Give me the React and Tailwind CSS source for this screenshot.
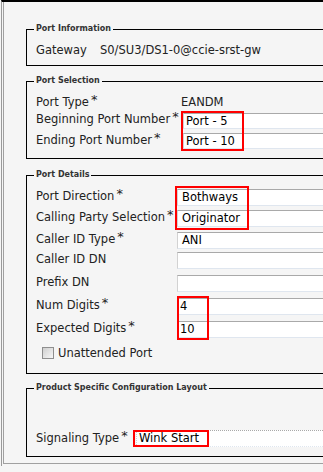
import React from "react";

// required-field marker
const Req = () => (
  <span className="relative -top-[2px] ml-[2px] text-[13px] leading-none">*</span>
);

// text box / dropdown look
const Box = ({ children, className = "" }) => (
  <div
    className={`flex-1 border border-[#d2d2d2] border-t-[#a9a9a9] border-b-[#dfe6ef] bg-white text-black whitespace-nowrap ${className}`}
  >
    {children}
  </div>
);

const Legend = ({ children }) => (
  <legend className="-ml-[2px] px-[2px] text-[8px] font-bold leading-[10px] text-[#333]">
    {children}
  </legend>
);

const Redline = ({ className = "" }) => (
  <div className={`pointer-events-none absolute border-2 border-[#ff0000] ${className}`} />
);

const DetailRow = ({ label, req, h, children }) => (
  <div className={`flex ${h}`}>
    <div className="w-[141px] pt-[1px] leading-[16px]">
      {label}
      {req && <Req />}
    </div>
    <div className="flex flex-1 pt-[2px]">{children}</div>
  </div>
);

export default function App() {
  return (
    <div className="h-[472px] w-[323px] overflow-hidden bg-[#f5f5f5] font-['DejaVu_Sans',sans-serif] text-[11.5px] text-[#222]">
      <div className="ml-px h-[466px] border-l border-t-2 border-[#9a9a9a] border-t-black">
        <div className="ml-px h-[462px] border-b border-l border-[#a0a0a0] pl-[22px] pt-[22px]">
          {/* Port Information */}
          <fieldset className="w-[330px] border border-black pb-[7px] pl-[9px] pt-[8px]">
            <Legend>Port Information</Legend>
            <div className="flex h-[16px] leading-[16px]">
              <div className="w-[64px]">Gateway</div>
              <div>S0/SU3/DS1-0@ccie-srst-gw</div>
            </div>
          </fieldset>

          {/* Port Selection */}
          <fieldset className="mt-[10px] w-[330px] border border-black pb-[7px] pl-[9px] pt-[7px]">
            <Legend>Port Selection</Legend>
            <div className="flex h-[18px] pt-[1px] leading-[16px]">
              <div className="w-[145px]">
                Port Type
                <Req />
              </div>
              <div>EANDM</div>
            </div>
            <div className="relative">
              <div className="flex h-[20px]">
                <div className="w-[145px] leading-[16px]">
                  Beginning Port Number
                  <Req />
                </div>
                <div className="flex flex-1 pl-[2px] pt-[2px]">
                  <Box className="h-[16px] pl-[2px] leading-[14px]">Port - 5</Box>
                </div>
              </div>
              <div className="flex h-[20px]">
                <div className="w-[145px] pt-[1px] leading-[16px]">
                  Ending Port Number
                  <Req />
                </div>
                <div className="flex flex-1 pl-[2px] pt-[2px]">
                  <Box className="h-[16px] pl-[2px] leading-[14px]">Port - 10</Box>
                </div>
              </div>
              <Redline className="left-[145px] top-0 h-[40px] w-[63px]" />
            </div>
          </fieldset>

          {/* Port Details */}
          <fieldset className="mt-[11px] w-[330px] border border-black pb-[8px] pl-[9px] pt-[7px]">
            <Legend>Port Details</Legend>
            <div className="relative">
              <DetailRow label="Port Direction" req h="h-[21px]">
                <Box className="h-[17px] pl-[4px] leading-[15px]">Bothways</Box>
              </DetailRow>
              <DetailRow label="Calling Party Selection" req h="h-[22px]">
                <Box className="h-[17px] pl-[4px] leading-[15px]">Originator</Box>
              </DetailRow>
              <Redline className="-top-[1px] left-[139px] h-[44px] w-[74px]" />
            </div>
            <DetailRow label="Caller ID Type" req h="h-[20px]">
              <Box className="h-[17px] pl-[4px] leading-[15px]">ANI</Box>
            </DetailRow>
            <DetailRow label="Caller ID DN" h="h-[23px]">
              <Box className="h-[17px]" />
            </DetailRow>
            <DetailRow label="Prefix DN" h="h-[23px]">
              <Box className="h-[17px]" />
            </DetailRow>
            <div className="relative">
              <DetailRow label="Num Digits" req h="h-[23px]">
                <Box className="h-[17px] pl-[2px] leading-[15px]">4</Box>
              </DetailRow>
              <DetailRow label="Expected Digits" req h="h-[22px]">
                <Box className="h-[17px] pl-[2px] leading-[15px]">10</Box>
              </DetailRow>
              <Redline className="left-[141px] top-0 h-[44px] w-[32px]" />
            </div>
            <div className="flex h-[24px] items-center pl-[6px]">
              <div className="h-[12px] w-[12px] border border-[#8e8e8e] bg-gradient-to-br from-[#cfcfcf] to-[#f7f7f7]" />
              <span className="ml-[4px] leading-[16px]">Unattended Port</span>
            </div>
          </fieldset>

          {/* Product Specific Configuration Layout */}
          <fieldset className="mt-[9px] w-[330px] border border-black pb-[5px] pl-[9px] pt-[36px]">
            <Legend>Product Specific Configuration Layout</Legend>
            <div className="relative flex h-[22px]">
              <div className="w-[97px] pt-[1px] leading-[16px]">
                Signaling Type
                <Req />
              </div>
              <div className="flex flex-1 pt-[1px]">
                <Box className="ml-[3px] h-[17px] border-dotted border-[#2c4c80] pl-[2px] leading-[15px]">
                  Wink Start
                </Box>
              </div>
              <Redline className="left-[97px] top-[1px] h-[17px] w-[76px]" />
            </div>
          </fieldset>
        </div>
      </div>
    </div>
  );
}
